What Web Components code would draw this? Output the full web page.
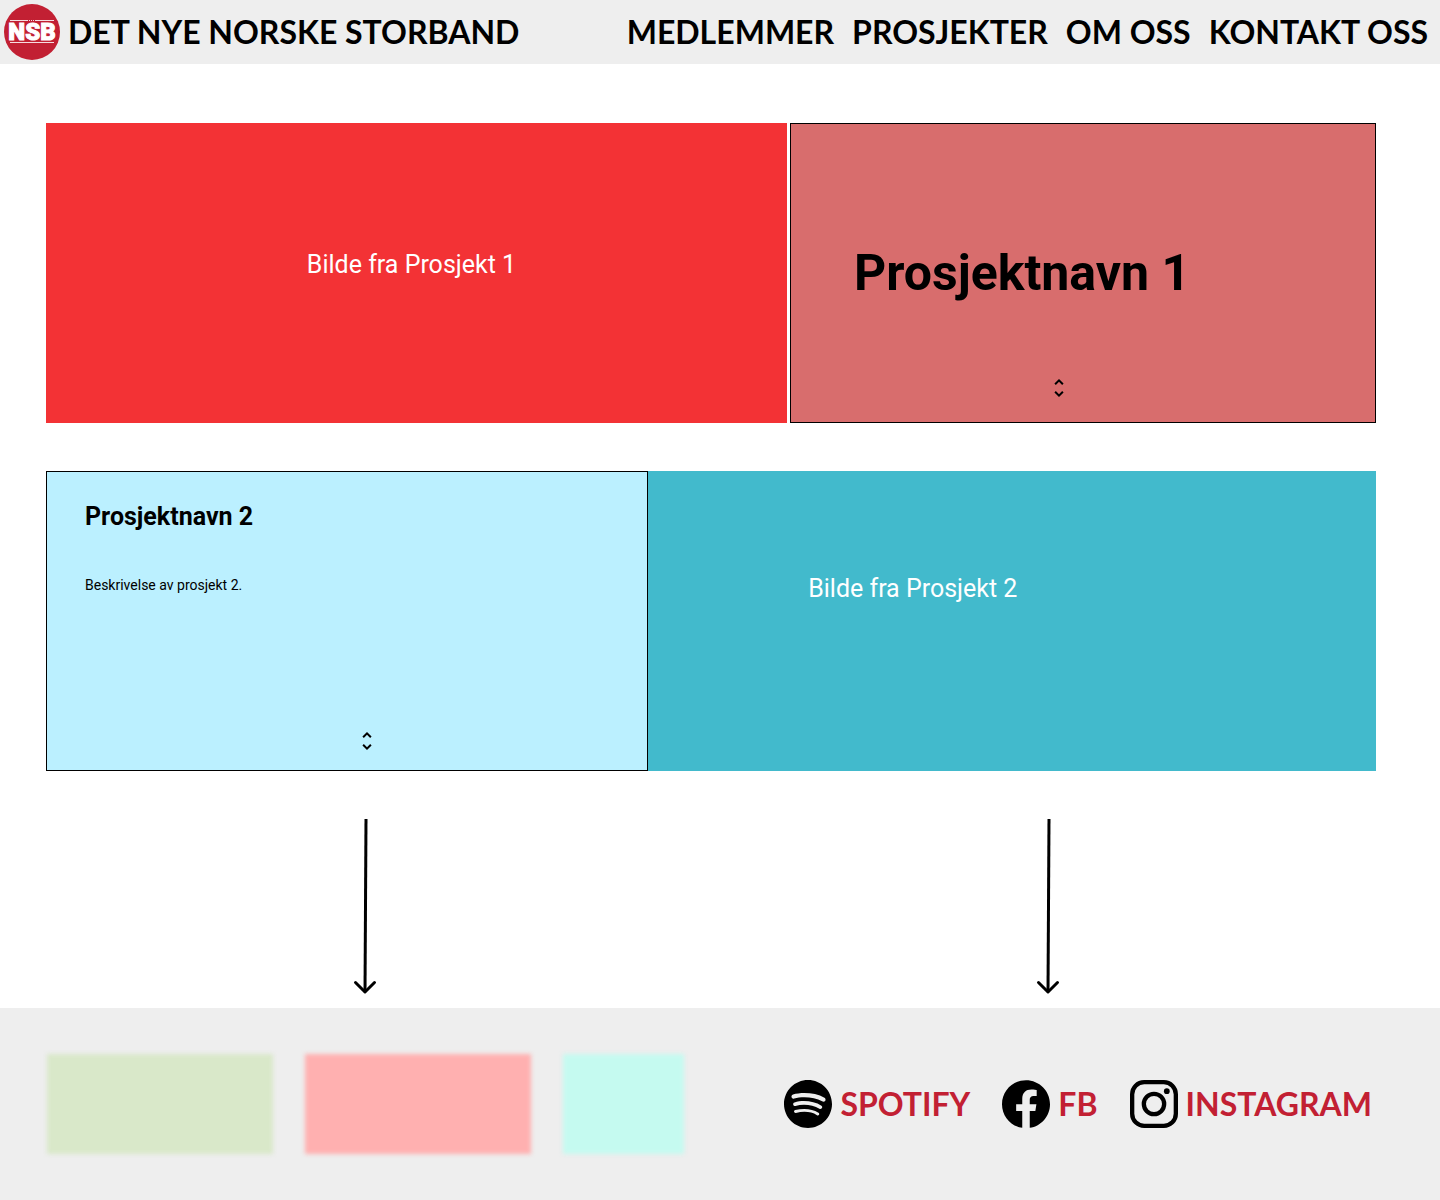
<!DOCTYPE html>
<html lang="no">
<head>
<meta charset="utf-8">
<title>Det Nye Norske Storband</title>
<style>
html, body { margin: 0; min-height: 100%; }
body { background: #fff; color: #000; font-family: Roboto, "Liberation Sans", sans-serif; }
</style>
</head>
<body>
<nsb-page></nsb-page>
<script>
class Base extends HTMLElement {
  constructor() {
    super();
    this.attachShadow({ mode: "open" }).innerHTML = this.view();
  }
}

customElements.define("nsb-logo", class extends Base {
  view() { return `
<style>:host{display:block;width:56px;height:56px;flex:none}svg{display:block;width:100%;height:100%}</style>
<svg viewBox="0 0 56 56" role="img" aria-label="NSB">
  <circle cx="28" cy="28" r="28" fill="#c22033"/>
  <path d="M6 16.5h44M6 38.5h44" stroke="#fff" stroke-width="1" opacity=".85"/>
  <path d="M24 16.500h8" stroke="#c22033" stroke-width="1" stroke-dasharray="1 1"/>
  <text x="28" y="36" text-anchor="middle" font-family="Roboto, sans-serif" font-weight="900" font-size="24" fill="#fff" stroke="#fff" stroke-width="1">NSB</text>
</svg>`; }
});

customElements.define("site-header", class extends Base {
  view() { return `
<style>
:host{display:block;background:#eee;font:700 32px/40px Lato,sans-serif}
header{display:flex;align-items:center;justify-content:space-between;height:64px;padding:0 12px 0 4px;box-sizing:border-box}
.brand{display:flex;align-items:center;gap:8px}
nav{display:flex;gap:18px}
a{color:inherit;text-decoration:none;white-space:nowrap}
</style>
<header><a class="brand" href="#"><nsb-logo></nsb-logo><span>DET NYE NORSKE STORBAND</span></a>
<nav><slot></slot></nav></header>`; }
});

customElements.define("nav-link", class extends Base {
  view() { return `<style>:host{display:block}a{color:inherit;text-decoration:none;white-space:nowrap}</style><a href="#"><slot></slot></a>`; }
});

customElements.define("expand-button", class extends Base {
  view() { return `
<style>:host{display:block;width:24px;height:24px}button{display:block;padding:0;border:0;background:none;color:#000;cursor:pointer}svg{display:block}</style>
<button type="button" aria-label="Utvid"><svg width="24" height="24" viewBox="0 0 24 24" fill="currentColor"><path d="M12 5.83L15.17 9l1.41-1.41L12 3 7.41 7.59 8.83 9 12 5.83zm0 12.34L8.83 15l-1.41 1.41L12 21l4.59-4.59L15.17 15 12 18.17z"/></svg></button>`; }
});

customElements.define("project-image", class extends Base {
  view() { return `
<style>:host{display:flex;box-sizing:border-box;color:#fff;font-size:25px;line-height:30px}</style><slot></slot>`; }
});

customElements.define("project-card", class extends Base {
  view() { return `
<style>
:host{display:flex;flex-direction:column;box-sizing:border-box;border:1px solid #000}
::slotted(h2){margin:0;font-size:25px;line-height:30px;font-weight:700}
::slotted(p){margin:43px 0 0;font-size:14px;line-height:20px}
:host([size=large]) ::slotted(h2){font-size:50px;line-height:60px}
footer{margin-top:auto;display:flex}
expand-button{margin-left:48%}
:host([size=large]) expand-button{margin-left:37%}
</style>
<slot></slot><footer><expand-button></expand-button></footer>`; }
});

customElements.define("down-arrow", class extends Base {
  view() { return `
<style>:host{display:block;width:24px}svg{display:block}</style>
<svg width="24" height="176" viewBox="0 0 24 176" fill="none" stroke="#000" stroke-width="3" aria-hidden="true"><path d="M13 0L12 173"/><path d="M2.5 163.5L12 173l9.500-9.500" stroke-linecap="round" stroke-linejoin="round"/></svg>`; }
});

const icons = {
  spotify: `<path fill="currentColor" d="M12 0C5.400 0 0 5.400 0 12s5.400 12 12 12 12-5.400 12-12S18.660 0 12 0zm5.521 17.340c-.240.359-.660.480-1.021.240-2.820-1.740-6.360-2.101-10.561-1.141-.418.122-.779-.179-.899-.539-.120-.421.180-.780.540-.900 4.560-1.021 8.520-.600 11.640 1.320.420.180.479.659.301 1.020zm1.440-3.300c-.301.420-.841.600-1.262.300-3.239-1.980-8.159-2.580-11.939-1.380-.479.120-1.020-.120-1.140-.600-.120-.480.120-1.021.600-1.141C9.600 9.900 15 10.561 18.720 12.840c.361.181.540.780.241 1.200zm.120-3.360C15.240 8.400 8.820 8.160 5.160 9.301c-.600.179-1.200-.181-1.380-.721-.180-.601.180-1.200.720-1.381 4.260-1.260 11.280-1.020 15.721 1.621.539.300.719 1.020.419 1.560-.299.421-1.020.599-1.559.300z"/>`,
  facebook: `<path fill="currentColor" d="M24 12.073c0-6.627-5.373-12-12-12s-12 5.373-12 12c0 5.990 4.388 10.954 10.125 11.854v-8.385H7.078v-3.470h3.047V9.430c0-3.007 1.792-4.669 4.533-4.669 1.312 0 2.686.235 2.686.235v2.953H15.830c-1.491 0-1.956.925-1.956 1.874v2.250h3.328l-.532 3.470h-2.796v8.385C19.612 23.027 24 18.062 24 12.073z"/>`,
  instagram: `<g fill="none" stroke="currentColor" stroke-width="2.160"><rect x="1.080" y="1.080" width="21.840" height="21.840" rx="6"/><circle cx="12" cy="12" r="5.080"/></g><circle cx="18.406" cy="5.594" r="1.440" fill="currentColor"/>`
};
customElements.define("social-link", class extends HTMLElement {
  connectedCallback() {
    this.attachShadow({ mode: "open" }).innerHTML = `
<style>:host{display:block}a{display:flex;align-items:center;gap:8px;color:#c22033;text-decoration:none}svg{color:#000;flex:none}</style>
<a href="#"><svg width="48" height="48" viewBox="0 0 24 24" aria-hidden="true">${icons[this.getAttribute("icon")]}</svg><span><slot></slot></span></a>`;
  }
});

customElements.define("site-footer", class extends Base {
  view() { return `
<style>
:host{display:flex;justify-content:space-between;align-items:center;background:#eee;min-height:192px;box-sizing:border-box;padding:0 68px 0 47px;font:700 32px/40px Lato,sans-serif}
.sponsors{display:flex;gap:32px}
.sponsors i{display:block;width:226px;height:100px;background:#d9e8c9;filter:blur(2px)}
.sponsors i:nth-child(2){background:#ffb0b0}
.sponsors i:nth-child(3){background:#c5faf0;width:121px}
nav{display:flex;gap:32px}
</style>
<div class="sponsors"><i></i><i></i><i></i></div><nav><slot></slot></nav>`; }
});

customElements.define("nsb-page", class extends Base {
  view() { return `
<style>
:host{display:flex;flex-direction:column;min-height:100vh}
main{flex:1;padding:59px 64px 0 46px}
section{display:grid;min-height:300px}
.one{grid-template-columns:741fr 586fr;gap:3px}
.two{grid-template-columns:602fr 728fr;margin-top:48px}
.one project-image{background:#f33235;align-items:center;justify-content:center;padding:0 10px 16px 0}
.two project-image{background:#42bacc;padding:103px 0 0 22%}
.one project-card{background:#d86d6d;padding:119px 0 22px 63px}
.two project-card{background:#bbf0ff;padding:30px 0 17px 38px}
.arrows{display:grid;grid-template-columns:307fr 683fr 340fr;padding-top:48px}
.arrows down-arrow:first-child{grid-column:2}
</style>
<site-header><nav-link>MEDLEMMER</nav-link><nav-link>PROSJEKTER</nav-link><nav-link>OM OSS</nav-link><nav-link>KONTAKT OSS</nav-link></site-header>
<main>
<section class="one"><project-image>Bilde fra Prosjekt 1</project-image><project-card size="large"><h2>Prosjektnavn 1</h2></project-card></section>
<section class="two"><project-card><h2>Prosjektnavn 2</h2><p>Beskrivelse av prosjekt 2.</p></project-card><project-image>Bilde fra Prosjekt 2</project-image></section>
<div class="arrows"><down-arrow></down-arrow><down-arrow></down-arrow></div>
</main>
<site-footer><social-link icon="spotify">SPOTIFY</social-link><social-link icon="facebook">FB</social-link><social-link icon="instagram">INSTAGRAM</social-link></site-footer>`; }
});
</script>
</body>
</html>
